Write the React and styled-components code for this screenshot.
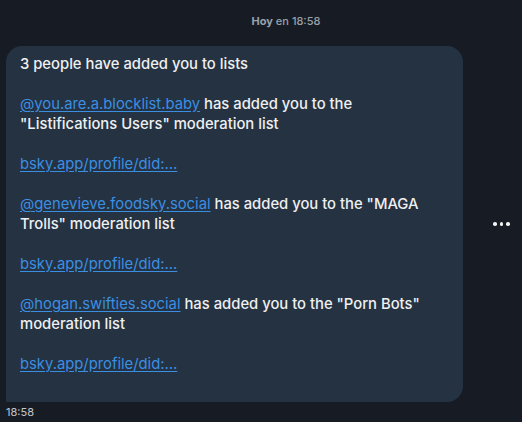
import React from "react";
import styled, { createGlobalStyle } from "styled-components";

const Global = createGlobalStyle`
  html, body { margin: 0; padding: 0; background: #171c24; }
  body { font-family: Inter, "Noto Sans", sans-serif; }
`;

const Page = styled.div`
  width: 522px;
  height: 422px;
  background: #171c24;
  display: flex;
  flex-direction: column;
  overflow: hidden;
`;

const DayHeader = styled.div`
  text-align: center;
  padding-top: 14px;
  height: 32px;
  box-sizing: border-box;
  font-size: 11px;
  line-height: 14px;
  color: #9aa1aa;
  font-weight: 500;
  padding-left: 50px;
  b { font-weight: 700; }
`;

const Row = styled.div`
  display: flex;
  align-items: center;
  padding-left: 6px;
  margin-top: 14px;
`;

const Bubble = styled.div`
  width: 457px;
  box-sizing: border-box;
  background: #253241;
  border-radius: 16px 16px 16px 0;
  padding: 8px 14px 28px 14px;
  color: #eef0f2;
  font-size: 14.8px;
  font-weight: 500;
  line-height: 20px;
`;

const Para = styled.p`
  margin: 0 0 20px 0;
  &:last-child { margin-bottom: 0; }
`;

const Link = styled.a`
  color: #3b8fe3;
  font-weight: 400;
  text-decoration: underline;
  text-underline-offset: 2px;
`;

const More = styled.div`
  margin-left: 30px;
  display: flex;
  gap: 3px;
`;

const Dot = styled.span`
  width: 3.5px;
  height: 3.5px;
  border-radius: 50%;
  background: #f2f2f2;
`;

const Time = styled.div`
  padding-left: 6px;
  margin-top: 3px;
  font-size: 11px;
  line-height: 14px;
  color: #c3c7cc;
`;

export default function App() {
  return (
    <Page>
      <Global />
      <DayHeader>
        <b>Hoy</b> en 18:58
      </DayHeader>
      <Row>
        <Bubble>
          <Para>3 people have added you to lists</Para>
          <Para>
            <Link>@you.are.a.blocklist.baby</Link> has added you to the
            <br />
            "Listifications Users" moderation list
          </Para>
          <Para>
            <Link>bsky.app/profile/did:...</Link>
          </Para>
          <Para>
            <Link>@genevieve.foodsky.social</Link> has added you to the "MAGA
            <br />
            Trolls" moderation list
          </Para>
          <Para>
            <Link>bsky.app/profile/did:...</Link>
          </Para>
          <Para>
            <Link>@hogan.swifties.social</Link> has added you to the "Porn Bots"
            <br />
            moderation list
          </Para>
          <Para>
            <Link>bsky.app/profile/did:...</Link>
          </Para>
        </Bubble>
        <More>
          <Dot />
          <Dot />
          <Dot />
        </More>
      </Row>
      <Time>18:58</Time>
    </Page>
  );
}
